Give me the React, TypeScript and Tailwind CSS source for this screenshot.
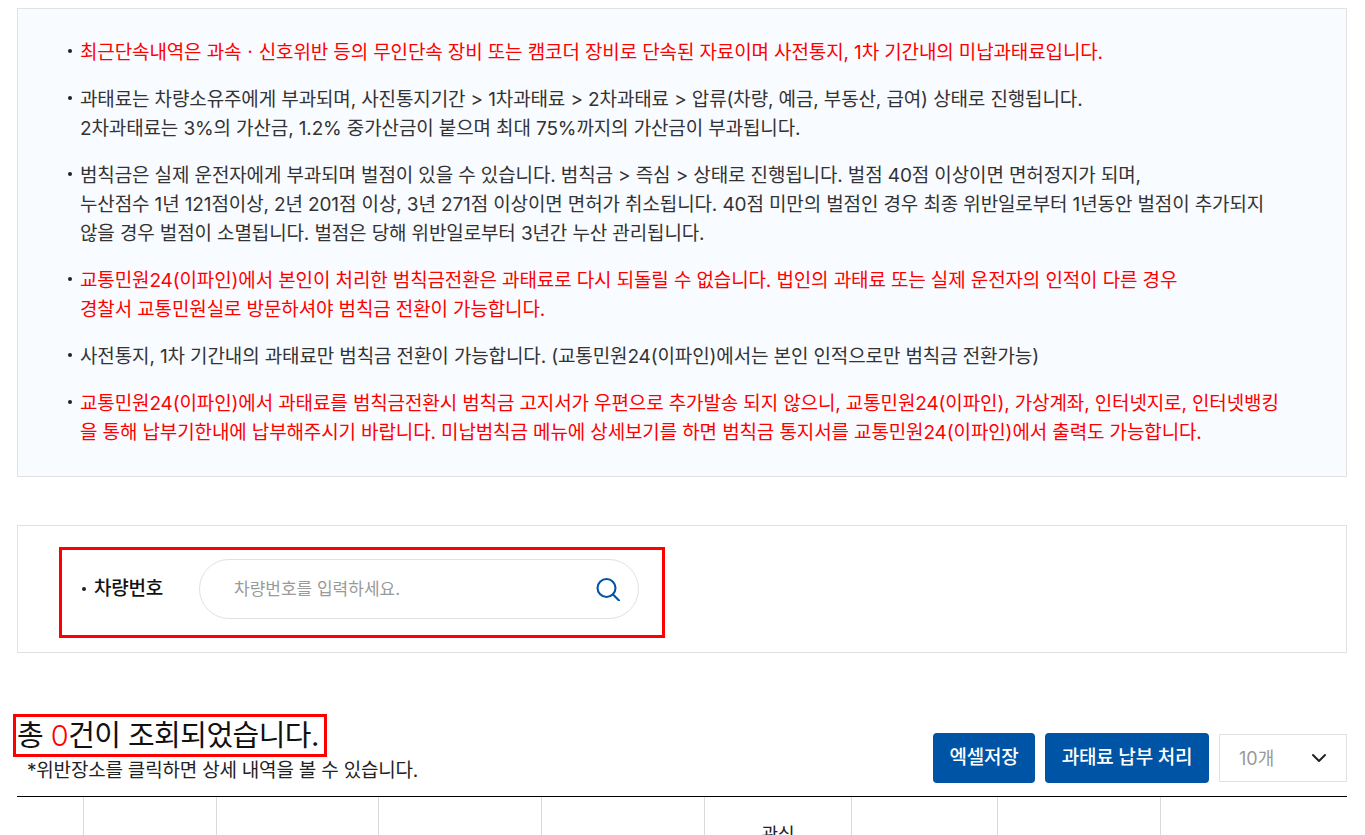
import { ChevronDown } from 'lucide-react'

const font = { fontFamily: 'Inter, "Noto Sans CJK KR", "Noto Sans", sans-serif' }

const notices: { red?: boolean; lines: string[] }[] = [
  { red: true, lines: ['최근단속내역은 과속ㆍ신호위반 등의 무인단속 장비 또는 캠코더 장비로 단속된 자료이며 사전통지, 1차 기간내의 미납과태료입니다.'] },
  { lines: ['과태료는 차량소유주에게 부과되며, 사진통지기간 > 1차과태료 > 2차과태료 > 압류(차량, 예금, 부동산, 급여) 상태로 진행됩니다.', '2차과태료는 3%의 가산금, 1.2% 중가산금이 붙으며 최대 75%까지의 가산금이 부과됩니다.'] },
  { lines: ['범칙금은 실제 운전자에게 부과되며 벌점이 있을 수 있습니다. 범칙금 > 즉심 > 상태로 진행됩니다. 벌점 40점 이상이면 면허정지가 되며,', '누산점수 1년 121점이상, 2년 201점 이상, 3년 271점 이상이면 면허가 취소됩니다. 40점 미만의 벌점인 경우 최종 위반일로부터 1년동안 벌점이 추가되지', '않을 경우 벌점이 소멸됩니다. 벌점은 당해 위반일로부터 3년간 누산 관리됩니다.'] },
  { red: true, lines: ['교통민원24(이파인)에서 본인이 처리한 범칙금전환은 과태료로 다시 되돌릴 수 없습니다. 법인의 과태료 또는 실제 운전자의 인적이 다른 경우', '경찰서 교통민원실로 방문하셔야 범칙금 전환이 가능합니다.'] },
  { lines: ['사전통지, 1차 기간내의 과태료만 범칙금 전환이 가능합니다. (교통민원24(이파인)에서는 본인 인적으로만 범칙금 전환가능)'] },
  { red: true, lines: ['교통민원24(이파인)에서 과태료를 범칙금전환시 범칙금 고지서가 우편으로 추가발송 되지 않으니, 교통민원24(이파인), 가상계좌, 인터넷지로, 인터넷뱅킹', '을 통해 납부기한내에 납부해주시기 바랍니다. 미납범칙금 메뉴에 상세보기를 하면 범칙금 통지서를 교통민원24(이파인)에서 출력도 가능합니다.'] },
]

const columns = ['w-[67px]', 'w-[133px]', 'w-[162px]', 'w-[163px]', 'w-[163px]', 'w-[147px]', 'w-[146px]', 'w-[163px]', 'flex-1']

export default function App() {
  return (
    <div style={font} className="h-[835px] w-[1365px] overflow-hidden bg-white pl-[17px] pr-[18px] pt-[8px] text-[#222]">
      <div className="h-[469px] border border-[#e1e1e1] bg-[#f8fbff] pl-[48px] pt-[30px]">
        <ul className="flex flex-col gap-[18.8px]">
          {notices.map((n, i) => (
            <li key={i} className={`relative pl-[14px] text-[19px] leading-[28.6px] tracking-[-0.13px] whitespace-nowrap ${n.red ? 'text-[#ff0000]' : 'text-[#333]'}`}>
              <span className="absolute left-[2px] top-[10px] h-[4px] w-[4px] rounded-full bg-[#222]" />
              {n.lines.map((l, j) => (
                <div key={j}>{l}</div>
              ))}
            </li>
          ))}
        </ul>
      </div>

      <div className="mt-[48px] h-[128px] border border-[#e1e1e1] pl-[41px] pt-[21px]">
        <div className="flex h-[91px] w-[606px] items-start border-[3px] border-[#ff0000] pl-[20px] pt-[9px]">
          <span className="mr-[32px] flex h-[60px] w-[85px] items-center whitespace-nowrap text-[19px] font-medium tracking-[-0.2px] text-[#111]">
            <span className="mr-[8px] h-[4px] w-[4px] shrink-0 rounded-full bg-[#222]" />
            차량번호
          </span>
          <div className="flex h-[60px] w-[440px] items-center justify-between rounded-[30px] border border-[#e1e1e1] pl-[34px] pr-[18px]">
            <span className="mt-[2px] text-[17px] text-[#9a9a9a]">차량번호를 입력하세요.</span>
            <svg className="h-[24px] w-[24px] text-[#0054a6]" viewBox="0 0 24 24" fill="none" stroke="currentColor" strokeWidth="2.1" strokeLinecap="round">
              <circle cx="10.5" cy="11" r="9" />
              <line x1="17" y1="17.5" x2="23" y2="23.5" />
            </svg>
          </div>
        </div>
      </div>

      <div className="mt-[61px] flex h-[82px] justify-between">
        <div className="-ml-[4px]">
          <div className="flex h-[43px] w-[314px] items-center whitespace-nowrap border-[3px] border-[#ff0000] pl-[1px] text-[29px] tracking-[-0.55px] text-[#111]">
            총&nbsp;<span className="font-light text-[#ff0000]">0</span>건이 조회되었습니다.
          </div>
          <p className="ml-[14px] mt-[2px] text-[19px] leading-[24px] tracking-[-0.2px] text-[#222]">*위반장소를 클릭하면 상세 내역을 볼 수 있습니다.</p>
        </div>
        <div className="flex items-start gap-[10px] pt-[19px]">
          <button className="h-[50px] w-[102px] rounded-[4px] bg-[#0054a6] pt-px text-[19px] font-medium tracking-[-0.2px] text-white">엑셀저장</button>
          <button className="h-[50px] w-[164px] rounded-[4px] bg-[#0054a6] pt-px text-[19px] font-medium tracking-[-0.2px] text-white">과태료 납부 처리</button>
          <div className="mt-px flex h-[48px] w-[128px] items-center justify-between border border-[#e1e1e1] pl-[19px] pr-[15px] text-[18px] text-[#999]">
            <span className="mt-px">10개</span>
            <ChevronDown className="h-[24px] w-[24px] text-[#222]" strokeWidth={2} />
          </div>
        </div>
      </div>

      <div className="flex h-[60px] border-t border-black">
        {columns.map((c, i) => (
          <div key={i} className={`${c} ${i < columns.length - 1 ? 'border-r border-[#d9d9d9]' : ''} flex justify-center pt-[26px] text-[18px] leading-[24px] text-[#222]`}>
            {i === 5 ? '관심' : ''}
          </div>
        ))}
      </div>
    </div>
  )
}
